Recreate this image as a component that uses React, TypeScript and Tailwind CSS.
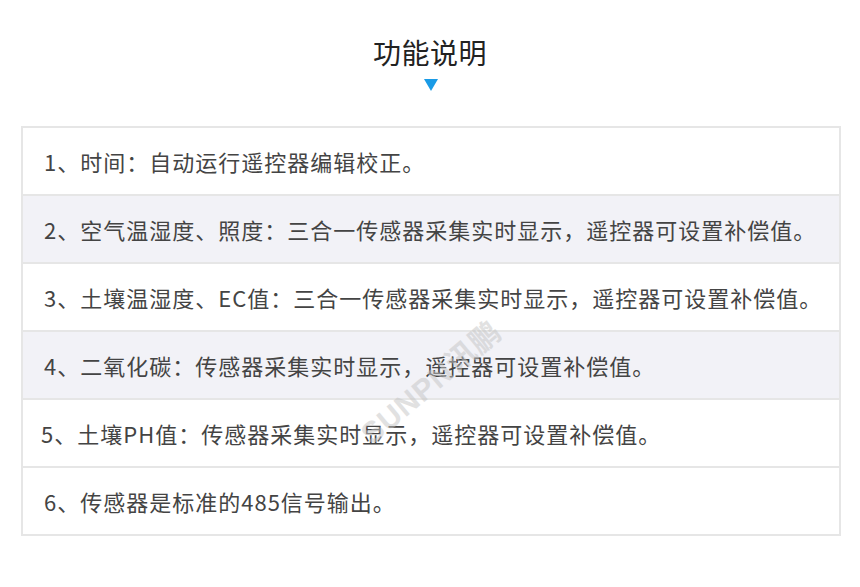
const rows = [
  { text: '1、时间：自动运行遥控器编辑校正。', gray: false, pl: 'pl-[21px]' },
  { text: '2、空气温湿度、照度：三合一传感器采集实时显示，遥控器可设置补偿值。', gray: true, pl: 'pl-[21px]' },
  { text: '3、土壤温湿度、EC值：三合一传感器采集实时显示，遥控器可设置补偿值。', gray: false, pl: 'pl-[21px]' },
  { text: '4、二氧化碳：传感器采集实时显示，遥控器可设置补偿值。', gray: true, pl: 'pl-[21px]' },
  { text: '5、土壤PH值：传感器采集实时显示，遥控器可设置补偿值。', gray: false, pl: 'pl-[18px]' },
  { text: '6、传感器是标准的485信号输出。', gray: false, pl: 'pl-[21px]' },
]

export default function App() {
  return (
    <div
      className="relative w-[860px] h-[587px] overflow-hidden bg-white"
      style={{ fontFamily: '"Noto Sans CJK SC", "Noto Sans", sans-serif' }}
    >
      <div className="flex flex-col items-center pt-[33px]">
        <h1 className="text-[28px] leading-[38px] font-normal text-[#222222] tracking-[0.5px]">功能说明</h1>
        <svg className="mt-[8px] ml-[2px]" width="14" height="12" viewBox="0 0 14 12">
          <polygon points="0,0 14,0 7,12" fill="#1a9be6" />
        </svg>
      </div>

      <div className="ml-[21px] mr-[19px] mt-[35px] border-2 border-[#e6e6e6]">
        {rows.map((r, i) => (
          <div
            key={i}
            className={`flex items-center h-[66px] ${r.pl} text-[22px] tracking-[1px] text-[#444444] ${
              i > 0 ? 'border-t-2 border-[#e6e6e6] h-[68px]' : ''
            } ${r.gray ? 'bg-[#f2f2f7]' : 'bg-white'}`}
          >
            {r.text}
          </div>
        ))}
      </div>

      {/* watermark */}
      <div
        className="absolute left-[345px] top-[360px] text-[30px] font-bold tracking-[1px] text-[#c4c4c4] opacity-50 select-none"
        style={{ transform: 'rotate(-40deg)', fontFamily: '"Liberation Sans", "Noto Sans CJK SC", sans-serif' }}
      >
        SUNPN讯鹏
      </div>
    </div>
  )
}
